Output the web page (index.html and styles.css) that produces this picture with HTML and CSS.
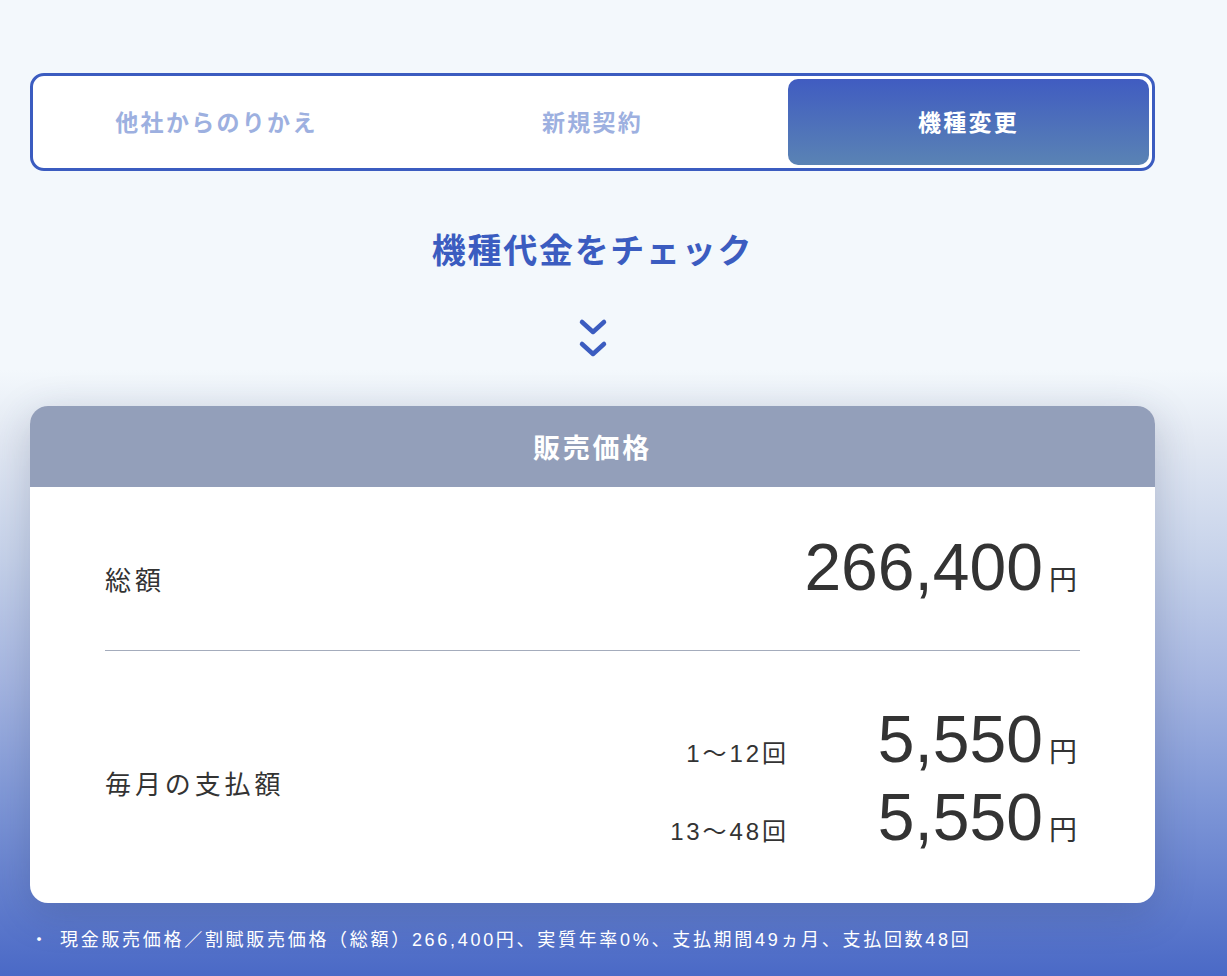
FILE: index.html
```html
<!DOCTYPE html>
<html lang="ja">
<head>
    <meta charset="UTF-8">
    <meta name="viewport" content="width=device-width, initial-scale=1.0">
    <title>機種代金をチェック</title>
    <link rel="stylesheet" href="styles.css">
</head>
<body>
    <div class="page">
        <div class="tabs">
            <div class="tab">他社からのりかえ</div>
            <div class="tab">新規契約</div>
            <div class="tab active">機種変更</div>
        </div>

        <h2 class="check-title">機種代金をチェック</h2>

        <div class="arrow">
            <svg width="30" height="40" viewBox="0 0 30 40">
                <path d="M4 4 L15 14 L26 4" />
                <path d="M4 26 L15 36 L26 26" />
            </svg>
        </div>

        <div class="price-card">
            <div class="card-head">販売価格</div>
            <div class="card-body">
                <div class="row total">
                    <div class="label">総額</div>
                    <div class="price"><span class="num">266,400</span><span class="yen">円</span></div>
                </div>
                <div class="row monthly">
                    <div class="label">毎月の支払額</div>
                    <div class="sub-list">
                        <div class="sub">
                            <span class="times">1〜12回</span>
                            <div class="price"><span class="num">5,550</span><span class="yen">円</span></div>
                        </div>
                        <div class="sub">
                            <span class="times">13〜48回</span>
                            <div class="price"><span class="num">5,550</span><span class="yen">円</span></div>
                        </div>
                    </div>
                </div>
            </div>
        </div>

        <p class="note"><span class="dot">・</span>現金販売価格／割賦販売価格（総額）266,400円、実質年率0%、支払期間49ヵ月、支払回数48回</p>
    </div>
</body>
</html>
```

FILE: styles.css
```css
body {
    margin: 0;
    min-height: 100vh;
    font-family: "Liberation Sans", "Noto Sans CJK JP", sans-serif;
    color: #333;
    background: linear-gradient(to bottom,
        #f3f8fc 0px,
        #f3f8fc 370px,
        #e3e9f3 440px,
        #c6d2ea 560px,
        #a6b6e1 680px,
        #7f97d7 800px,
        #4a69c6 976px);
}

.page {
    width: 1125px;
    padding: 73px 0 20px 30px;
}

/* タブ */
.tabs {
    display: grid;
    grid-template-columns: repeat(3, 1fr);
    gap: 15px;
    padding: 3px;
    background: #fff;
    border: 3px solid #3b5cc0;
    border-radius: 14px;
}

.tab {
    height: 86px;
    padding-bottom: 3px;
    box-sizing: border-box;
    display: flex;
    align-items: center;
    justify-content: center;
    font-family: "Noto Sans CJK JP", sans-serif;
    font-size: 23px;
    font-weight: bold;
    letter-spacing: 0.1em;
    color: #9db0e0;
    border-radius: 10px;
}

.tab.active {
    color: #fff;
    background: linear-gradient(to bottom, #405cc1, #5a83b4);
}

.check-title {
    margin: 54px 0 0;
    text-align: center;
    font-family: "Noto Sans CJK JP", sans-serif;
    font-size: 34px;
    font-weight: bold;
    letter-spacing: 0.05em;
    line-height: 1.4;
    color: #3b5cc0;
}

.arrow {
    display: flex;
    justify-content: center;
    margin-top: 45px;
}

.arrow path {
    fill: none;
    stroke: #3b5cc0;
    stroke-width: 4.5;
    stroke-linecap: round;
    stroke-linejoin: round;
}

/* 価格カード */
.price-card {
    margin-top: 48px;
    background: #fff;
    border-radius: 18px;
    overflow: hidden;
    box-shadow: 0 10px 40px rgba(40, 55, 90, 0.22);
}

.card-head {
    height: 81px;
    display: flex;
    align-items: center;
    justify-content: center;
    background: #939fba;
    color: #fff;
    font-family: "Noto Sans CJK JP", sans-serif;
    font-size: 27px;
    font-weight: bold;
    letter-spacing: 0.1em;
}

.card-body {
    padding: 0 75px;
}

.row {
    display: flex;
    justify-content: space-between;
}

.row.total {
    align-items: baseline;
    padding: 47px 0 50px;
    border-bottom: 1px solid #a4acbc;
}

.row.monthly {
    align-items: center;
    padding: 55px 0 53px;
}

.label {
    font-family: "Noto Sans CJK JP", sans-serif;
    font-size: 26px;
    letter-spacing: 0.15em;
}

.monthly .label {
    padding-top: 10px;
}

.price {
    display: flex;
    align-items: baseline;
}

.num {
    font-family: "Liberation Sans", sans-serif;
    font-size: 66px;
    line-height: 1;
    color: #333;
}

.yen {
    margin: 0 3px 0 6px;
    font-family: "Noto Sans CJK JP", sans-serif;
    font-size: 28px;
}

.sub-list {
    display: flex;
    flex-direction: column;
    gap: 12px;
}

.sub {
    display: flex;
    justify-content: flex-end;
    align-items: baseline;
}

.times {
    margin-right: 89px;
    font-size: 24px;
    letter-spacing: 0.12em;
}

.note {
    display: flex;
    margin: 24px 0 0;
    color: #fff;
    font-size: 18px;
    line-height: 1.5;
    letter-spacing: 0.15em;
}

.dot {
    width: 30px;
    letter-spacing: 0;
}
```
